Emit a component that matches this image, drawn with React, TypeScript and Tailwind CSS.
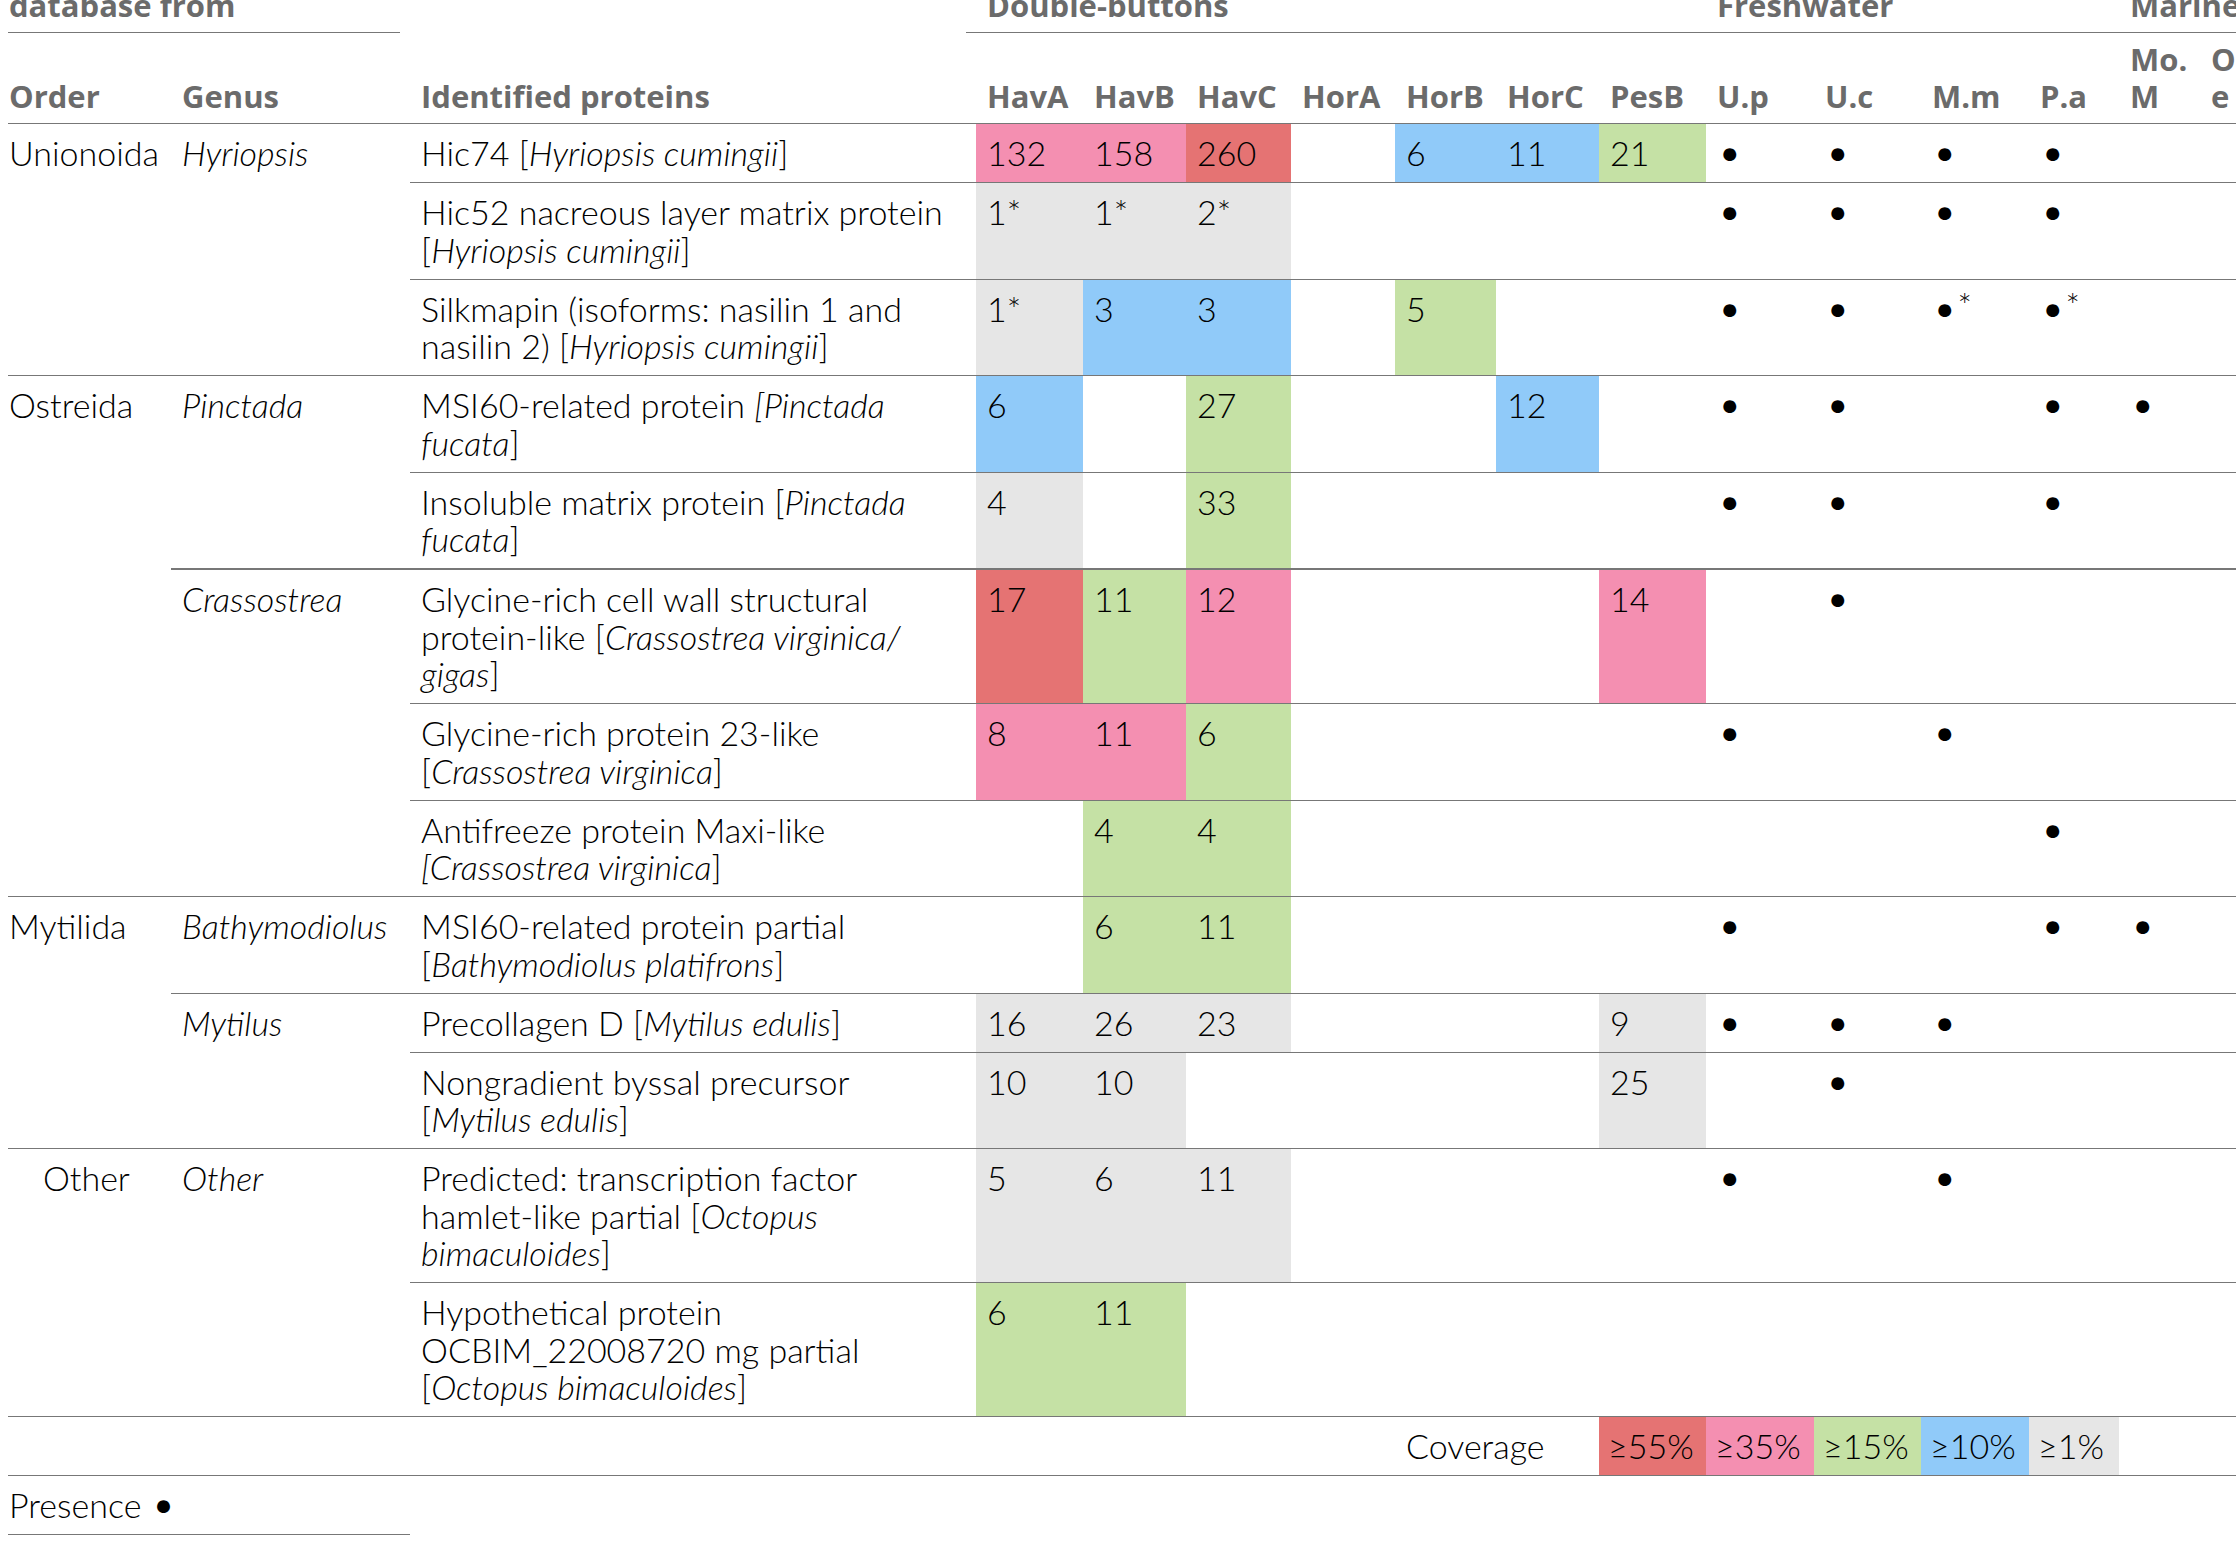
import React from "react";

// coverage colours
const bg: Record<string, string> = {
  r: "bg-[#e57373]",
  p: "bg-[#f48fb1]",
  g: "bg-[#c5e1a5]",
  b: "bg-[#90caf9]",
  y: "bg-[#e6e6e6]",
};

type Row = {
  order?: [string, number, boolean?];
  genus?: [string, number];
  protein: React.ReactNode;
  cov: (string | null)[];
  pres: string[];
  thick?: boolean;
};

const rows: Row[] = [
  {
    order: ["Unionoida", 3],
    genus: ["Hyriopsis", 3],
    protein: <>Hic74 [<i>Hyriopsis cumingii</i>]</>,
    cov: ["132p", "158p", "260r", null, "6b", "11b", "21g"],
    pres: ["•", "•", "•", "•", "", ""],
  },
  {
    protein: <>Hic52 nacreous layer matrix protein<br />[<i>Hyriopsis cumingii</i>]</>,
    cov: ["1*y", "1*y", "2*y", null, null, null, null],
    pres: ["•", "•", "•", "•", "", ""],
  },
  {
    protein: <>Silkmapin (isoforms: nasilin 1 and<br />nasilin 2) [<i>Hyriopsis cumingii</i>]</>,
    cov: ["1*y", "3b", "3b", null, "5g", null, null],
    pres: ["•", "•", "•*", "•*", "", ""],
  },
  {
    order: ["Ostreida", 5],
    genus: ["Pinctada", 2],
    protein: <>MSI60-related protein <i>[Pinctada</i><br /><i>fucata</i>]</>,
    cov: ["6b", null, "27g", null, null, "12b", null],
    pres: ["•", "•", "", "•", "•", ""],
  },
  {
    protein: <>Insoluble matrix protein [<i>Pinctada</i><br /><i>fucata</i>]</>,
    cov: ["4y", null, "33g", null, null, null, null],
    pres: ["•", "•", "", "•", "", ""],
    thick: true,
  },
  {
    genus: ["Crassostrea", 3],
    protein: <>Glycine-rich cell wall structural<br />protein-like [<i>Crassostrea virginica/</i><br /><i>gigas</i>]</>,
    cov: ["17r", "11g", "12p", null, null, null, "14p"],
    pres: ["", "•", "", "", "", ""],
  },
  {
    protein: <>Glycine-rich protein 23-like<br />[<i>Crassostrea virginica</i>]</>,
    cov: ["8p", "11p", "6g", null, null, null, null],
    pres: ["•", "", "•", "", "", ""],
  },
  {
    protein: <>Antifreeze protein Maxi-like<br /><i>[Crassostrea virginica</i>]</>,
    cov: [null, "4g", "4g", null, null, null, null],
    pres: ["", "", "", "•", "", ""],
  },
  {
    order: ["Mytilida", 3],
    genus: ["Bathymodiolus", 1],
    protein: <>MSI60-related protein partial<br />[<i>Bathymodiolus platifrons</i>]</>,
    cov: [null, "6g", "11g", null, null, null, null],
    pres: ["•", "", "", "•", "•", ""],
  },
  {
    genus: ["Mytilus", 2],
    protein: <>Precollagen D [<i>Mytilus edulis</i>]</>,
    cov: ["16y", "26y", "23y", null, null, null, "9y"],
    pres: ["•", "•", "•", "", "", ""],
  },
  {
    protein: <>Nongradient byssal precursor<br />[<i>Mytilus edulis</i>]</>,
    cov: ["10y", "10y", null, null, null, null, "25y"],
    pres: ["", "•", "", "", "", ""],
  },
  {
    order: ["Other", 2, true],
    genus: ["Other", 2],
    protein: <>Predicted: transcription factor<br />hamlet-like partial [<i>Octopus</i><br /><i>bimaculoides</i>]</>,
    cov: ["5y", "6y", "11y", null, null, null, null],
    pres: ["•", "", "•", "", "", ""],
  },
  {
    protein: <>Hypothetical protein<br />OCBIM_22008720 mg partial<br />[<i>Octopus bimaculoides</i>]</>,
    cov: ["6g", "11g", null, null, null, null, null],
    pres: ["", "", "", "", "", ""],
  },
];

const widths = [
  "w-[163px]", "w-[239px]", "w-[566px]",
  "w-[107px]", "w-[103px]", "w-[105px]", "w-[104px]", "w-[101px]", "w-[103px]", "w-[107px]",
  "w-[108px]", "w-[107px]", "w-[108px]", "w-[90px]", "w-[81px]", "w-[90px]",
];

const td = "align-top pt-[10px] pb-[10.5px] pr-[4px] leading-[37.5px] border-[#777]";
const th = "text-left align-bottom font-['Open_Sans',sans-serif] text-[31px] font-bold text-[#6b6b6b] leading-[37px]";

// presence mark: a larger bullet, with an optional asterisk
function Mark({ v }: { v: string }) {
  if (!v) return null;
  return (
    <>
      <span className="text-[44px] leading-[0] relative top-[2px]">•</span>
      {v.length > 1 && <span className="relative -top-[4px]">*</span>}
    </>
  );
}

export default function App() {
  return (
    <div className="w-[2236px] h-[1542px] overflow-hidden bg-white text-black font-['Lato',sans-serif] text-[34px] font-light">
      <div className="-mt-[23px] pl-[8px]">
        <table className="border-collapse table-fixed w-[2282px]">
          <colgroup>
            {widths.map((w, i) => (
              <col key={i} className={w} />
            ))}
          </colgroup>
          <thead>
            <tr>
              <th colSpan={2} className={`${th} p-0`}>
                <div className="mr-[10px] pl-[1px] pt-[10px] pb-[8px] border-b border-[#777]">database from</div>
              </th>
              <th className="p-0" />
              <th colSpan={7} className={`${th} p-0`}>
                <div className="-ml-[10px] pl-[21px] pt-[10px] pb-[8px] border-b border-[#777]">Double-buttons</div>
              </th>
              <th colSpan={4} className={`${th} p-0`}>
                <div className="pl-[11px] pt-[10px] pb-[8px] border-b border-[#777]">Freshwater</div>
              </th>
              <th colSpan={2} className={`${th} p-0`}>
                <div className="pl-[11px] pt-[10px] pb-[8px] border-b border-[#777]">Marine</div>
              </th>
            </tr>
            <tr>
              {["Order", "Genus", "Identified proteins", "HavA", "HavB", "HavC", "HorA", "HorB", "HorC", "PesB", "U.p", "U.c", "M.m", "P.a"].map(
                (h, i) => (
                  <th key={h} className={`${th} pt-[8px] pb-[8px] ${i === 0 ? "pl-[1px]" : "pl-[11px]"} border-b border-[#777]`}>
                    {h}
                  </th>
                )
              )}
              <th className={`${th} pt-[8px] pb-[8px] pl-[11px] border-b border-[#777]`}>
                Mo.
                <br />M
              </th>
              <th className={`${th} pt-[8px] pb-[8px] pl-[11px] border-b border-[#777]`}>
                O.
                <br />e
              </th>
            </tr>
          </thead>
          <tbody>
            {rows.map((r, ri) => (
              <tr key={ri}>
                {r.order && (
                  <td rowSpan={r.order[1]} className={`${td} border-b ${r.order[2] ? "pl-[35px]" : "pl-[1px]"}`}>
                    {r.order[0]}
                  </td>
                )}
                {r.genus && (
                  <td rowSpan={r.genus[1]} className={`${td} pl-[11px] italic ${r.genus[0] === "Pinctada" ? "border-b-2" : "border-b"}`}>
                    {r.genus[0]}
                  </td>
                )}
                <td className={`${td} pl-[11px] ${r.thick ? "border-b-2" : "border-b"}`}>{r.protein}</td>
                {r.cov.map((c, ci) => (
                  <td key={ci} className={`${td} pl-[11px] ${r.thick ? "border-b-2" : "border-b"} ${c ? bg[c.slice(-1)] : ""}`}>
                    {c ? c.slice(0, -1) : ""}
                  </td>
                ))}
                {r.pres.map((p, pi) => (
                  <td key={pi} className={`${td} pl-[11px] ${r.thick ? "border-b-2" : "border-b"}`}>
                    <Mark v={p} />
                  </td>
                ))}
              </tr>
            ))}
            <tr>
              <td colSpan={7} className={`${td} pl-[11px] border-b`} />
              <td colSpan={2} className={`${td} pl-[11px] border-b`}>
                Coverage
              </td>
              {[
                ["≥55%", "r"],
                ["≥35%", "p"],
                ["≥15%", "g"],
                ["≥10%", "b"],
                ["≥1%", "y"],
              ].map(([t, c]) => (
                <td key={t} className={`${td} pl-[9px] border-b ${bg[c]}`}>
                  {t}
                </td>
              ))}
              <td colSpan={2} className={`${td} pl-[11px] border-b`} />
            </tr>
            <tr>
              <td colSpan={2} className={`${td} pl-[1px] border-b`}>
                Presence <Mark v="•" />
              </td>
              <td colSpan={14} />
            </tr>
          </tbody>
        </table>
      </div>
    </div>
  );
}
